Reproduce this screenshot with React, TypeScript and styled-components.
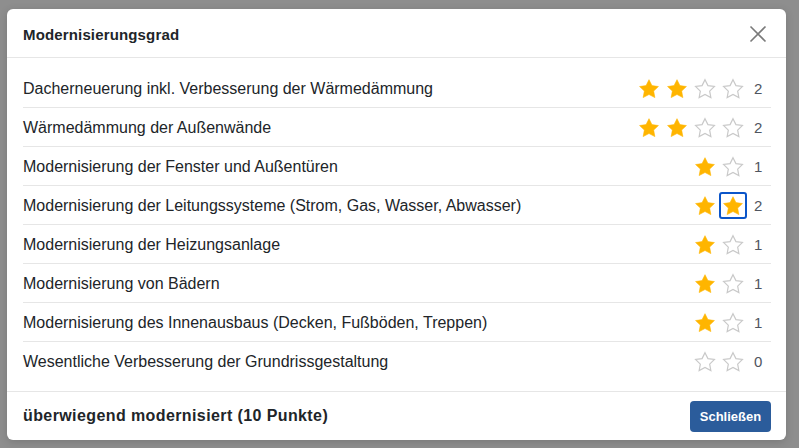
import React from "react";
import styled, { createGlobalStyle } from "styled-components";

const Global = createGlobalStyle`
  html, body { margin: 0; padding: 0; }
  body {
    background: #8e8e8e;
    font-family: "Liberation Sans", Arial, Helvetica, sans-serif;
    color: #212529;
  }
  * { box-sizing: border-box; }
`;

const Page = styled.div`
  width: 799px;
  height: 448px;
  padding: 9px 13px 0 7px;
  overflow: hidden;
`;

const Modal = styled.div`
  width: 779px;
  height: 431px;
  background: #fff;
  border-radius: 6px;
  display: flex;
  flex-direction: column;
  box-shadow: 0 2px 8px rgba(0, 0, 0, 0.15);
`;

const Header = styled.div`
  height: 49px;
  display: flex;
  align-items: center;
  justify-content: space-between;
  padding: 2px 18px 0 16px;
  border-bottom: 1px solid #e6e6e6;
`;

const Title = styled.h2`
  margin: 0;
  font-size: 15px;
  font-weight: 700;
  letter-spacing: 0.15px;
  color: #212529;
`;

const CloseButton = styled.button`
  width: 20px;
  height: 20px;
  padding: 0;
  border: 0;
  background: transparent;
  display: flex;
  align-items: center;
  justify-content: center;
  cursor: pointer;
`;

const Body = styled.div`
  flex: 1;
  padding: 11px 15px 0 16px;
  border-bottom: 1px solid #e6e6e6;
`;

const Row = styled.div<{ $last?: boolean }>`
  height: 39px;
  display: flex;
  align-items: center;
  justify-content: space-between;
  padding-top: 1px;
  border-bottom: 1px solid ${(p) => (p.$last ? "transparent" : "#e6e6e6")};
`;

const Label = styled.span`
  font-size: 16px;
  color: #212529;
`;

const Rating = styled.div`
  display: flex;
  align-items: center;
`;

const StarButton = styled.button<{ $focused?: boolean }>`
  width: 28px;
  height: 27px;
  padding: 0;
  margin: 0;
  background: transparent;
  border: 2px solid ${(p) => (p.$focused ? "#0b55c9" : "transparent")};
  border-radius: 3px;
  display: flex;
  align-items: center;
  justify-content: center;
  cursor: pointer;
`;

const Count = styled.span`
  width: 17px;
  margin-left: 7px;
  font-size: 15px;
  color: #4f5560;
`;

const Footer = styled.div`
  height: 48px;
  display: flex;
  align-items: center;
  justify-content: space-between;
  padding: 0 15px 0 16px;
`;

const Summary = styled.span`
  font-size: 16px;
  font-weight: 700;
  letter-spacing: 0.4px;
  color: #212529;
`;

const PrimaryButton = styled.button`
  width: 81px;
  height: 31px;
  border: 0;
  border-radius: 4px;
  background: #2b5c9b;
  color: #fff;
  font-family: "Liberation Sans", Arial, sans-serif;
  font-size: 13px;
  font-weight: 700;
  cursor: pointer;
`;

const StarIcon = ({ filled }: { filled: boolean }) => (
  <svg width="22" height="22" viewBox="0 0 24 24">
    <polygon
      points="12 1.8 15.2 8.3 22.3 9.3 17.1 14.3 18.4 21.4 12 18 5.6 21.4 6.9 14.3 1.7 9.3 8.8 8.3"
      fill={filled ? "#ffb500" : "none"}
      stroke={filled ? "#ffb500" : "#c9c9c9"}
      strokeWidth={filled ? 0.6 : 1.3}
      strokeLinejoin="miter"
    />
  </svg>
);

type Item = { label: string; max: number; value: number; focus?: number };

const items: Item[] = [
  { label: "Dacherneuerung inkl. Verbesserung der Wärmedämmung", max: 4, value: 2 },
  { label: "Wärmedämmung der Außenwände", max: 4, value: 2 },
  { label: "Modernisierung der Fenster und Außentüren", max: 2, value: 1 },
  { label: "Modernisierung der Leitungssysteme (Strom, Gas, Wasser, Abwasser)", max: 2, value: 2, focus: 1 },
  { label: "Modernisierung der Heizungsanlage", max: 2, value: 1 },
  { label: "Modernisierung von Bädern", max: 2, value: 1 },
  { label: "Modernisierung des Innenausbaus (Decken, Fußböden, Treppen)", max: 2, value: 1 },
  { label: "Wesentliche Verbesserung der Grundrissgestaltung", max: 2, value: 0 },
];

export default function App() {
  return (
    <>
      <Global />
      <Page>
        <Modal>
          <Header>
            <Title>Modernisierungsgrad</Title>
            <CloseButton aria-label="Schließen">
              <svg width="18" height="18" viewBox="0 0 18 18">
                <path d="M1.5 1.5 L16.5 16.5 M16.5 1.5 L1.5 16.5" stroke="#7a7a7a" strokeWidth="1.6" fill="none" />
              </svg>
            </CloseButton>
          </Header>
          <Body>
            {items.map((it, i) => (
              <Row key={it.label} $last={i === items.length - 1}>
                <Label>{it.label}</Label>
                <Rating>
                  {Array.from({ length: it.max }).map((_, s) => (
                    <StarButton key={s} $focused={it.focus === s}>
                      <StarIcon filled={s < it.value} />
                    </StarButton>
                  ))}
                  <Count>{it.value}</Count>
                </Rating>
              </Row>
            ))}
          </Body>
          <Footer>
            <Summary>überwiegend modernisiert (10 Punkte)</Summary>
            <PrimaryButton>Schließen</PrimaryButton>
          </Footer>
        </Modal>
      </Page>
    </>
  );
}
